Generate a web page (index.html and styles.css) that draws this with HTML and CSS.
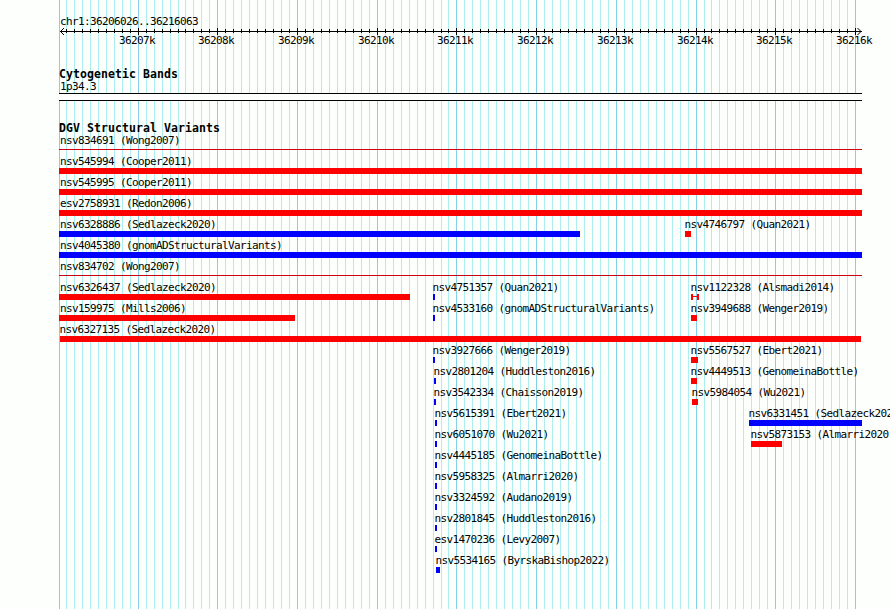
FILE: index.html
```
<!DOCTYPE html>
<html lang="en">
<head>
    <meta charset="UTF-8">
    <title>chr1:36206026..36216063</title>
    <link rel="stylesheet" href="styles.css">
</head>
<body>
    <div class="panel">
        <svg class="grid" id="grid" width="890" height="609"></svg>

        <div class="region">chr1:36206026..36216063</div>
        <svg class="ruler" id="ruler" width="890" height="20"></svg>

        <h2 class="track-title">Cytogenetic Bands</h2>
        <div class="band-label">1p34.3</div>
        <div class="band"></div>

        <h2 class="track-title variants-title">DGV Structural Variants</h2>
        <div id="variants"></div>
    </div>

    <script src="script.js"></script>
</body>
</html>
```
FILE: styles.css
```
body {
    margin: 0;
    background-color: #fdfffc;
    color: #000;
    font-family: "DejaVu Sans Mono", monospace;
    font-size: 11px;
    line-height: 13px;
    letter-spacing: -0.622px;
    white-space: nowrap;
}

.panel {
    position: relative;
    width: 890px;
    height: 609px;
    box-sizing: border-box;
    padding-top: 15px;
    overflow: hidden;
}

/* grid lines sit behind every track */
.grid {
    position: absolute;
    top: 0;
    left: 0;
    z-index: -1;
}

.grid .minor {
    fill: #afeeee;
}

.grid .major {
    fill: #87ceeb;
}

.region,
.band-label {
    padding-left: 60px;
}

.ruler {
    display: block;
    overflow: visible;
}

.ruler path {
    fill: none;
    stroke: #000;
}

.track-title {
    margin: 20px 0 0;
    padding-left: 59px;
    font-size: 11.5px;
    line-height: 12px;
    font-weight: bold;
    letter-spacing: 0.077px;
}

.band {
    width: 803px;
    height: 8px;
    box-sizing: border-box;
    margin-left: 59px;
    border-top: 1px solid #000;
    border-bottom: 1px solid #000;
    background-color: #fff;
}

.variants-title {
    margin-top: 21px;
}

/* every feature shares the single cell of its row */
.row {
    display: grid;
    grid-template-columns: 890px;
    height: 21px;
}

.feature {
    grid-area: 1 / 1;
}

.name {
    margin-left: -0.5px;
}

/* names of features cut off by the left edge start inside it */
.clamped .name {
    margin-left: 0;
    padding-left: 1px;
}

.bar {
    height: 6px;
}

.loss {
    background-color: #f00;
}

.gain {
    background-color: #00f;
}

.line {
    height: 1px;
    margin-top: 2px;
    background-color: #d00010;
}

.range {
    box-sizing: border-box;
    border: solid #f00;
    border-width: 0 2px;
    background: linear-gradient(#f00, #f00) 0 2px / 100% 1px no-repeat;
}
```
FILE: script.js
```
var START = 36206026;
var SCALE = 800 / 10038;
var LEFT = 60.53;

// [name, x, width, type]
var rows = [
    [["nsv834691 (Wong2007)", 59, 803, "line"]],
    [["nsv545994 (Cooper2011)", 59, 803, "loss"]],
    [["nsv545995 (Cooper2011)", 59, 803, "loss"]],
    [["esv2758931 (Redon2006)", 59, 803, "loss"]],
    [["nsv6328886 (Sedlazeck2020)", 59, 521, "gain"], ["nsv4746797 (Quan2021)", 685, 6, "loss"]],
    [["nsv4045380 (gnomADStructuralVariants)", 59, 803, "gain"]],
    [["nsv834702 (Wong2007)", 59, 803, "line"]],
    [["nsv6326437 (Sedlazeck2020)", 59, 351, "loss"], ["nsv4751357 (Quan2021)", 433, 2, "gain"], ["nsv1122328 (Alsmadi2014)", 691, 8, "range"]],
    [["nsv159975 (Mills2006)", 59, 236, "loss"], ["nsv4533160 (gnomADStructuralVariants)", 433, 2, "gain"], ["nsv3949688 (Wenger2019)", 691, 6, "loss"]],
    [["nsv6327135 (Sedlazeck2020)", 60, 801, "loss"]],
    [["nsv3927666 (Wenger2019)", 433, 2, "gain"], ["nsv5567527 (Ebert2021)", 691, 7, "loss"]],
    [["nsv2801204 (Huddleston2016)", 434, 2, "gain"], ["nsv4449513 (GenomeinaBottle)", 691, 6, "loss"]],
    [["nsv3542334 (Chaisson2019)", 434, 2, "gain"], ["nsv5984054 (Wu2021)", 692, 6, "loss"]],
    [["nsv5615391 (Ebert2021)", 435, 2, "gain"], ["nsv6331451 (Sedlazeck2020)", 749, 113, "gain"]],
    [["nsv6051070 (Wu2021)", 435, 2, "gain"], ["nsv5873153 (Almarri2020)", 751, 31, "loss"]],
    [["nsv4445185 (GenomeinaBottle)", 435, 2, "gain"]],
    [["nsv5958325 (Almarri2020)", 435, 2, "gain"]],
    [["nsv3324592 (Audano2019)", 435, 2, "gain"]],
    [["nsv2801845 (Huddleston2016)", 435, 2, "gain"]],
    [["esv1470236 (Levy2007)", 435, 2, "gain"]],
    [["nsv5534165 (ByrskaBishop2022)", 436, 4, "gain"]]
];

function drawScale() {
    var grid = '<rect class="major" x="59" y="0" width="1" height="609"/>';
    // axis with its two arrow heads
    var ticks = "M60 3.5H862M64 0L60.5 3.5L64 7M857.5 0L861 3.5L857.5 7";
    var labels = "";

    for (var pos = 36206100; pos <= 36216000; pos += 100) {
        var x = Math.floor(LEFT + (pos - START) * SCALE);
        var major = pos % 1000 === 0;
        grid += '<rect class="' + (major ? "major" : "minor") + '" x="' + x + '" y="0" width="1" height="609"/>';
        ticks += "M" + (x + 0.5) + (major ? " 0V7" : " 1V5");
        if (major) {
            labels += '<text x="' + (x - 19) + '" y="16">' + pos / 1000 + "k</text>";
        }
    }

    document.getElementById("grid").innerHTML = grid;
    document.getElementById("ruler").innerHTML = '<path d="' + ticks + '"/>' + labels;
}

function drawVariants() {
    var html = "";
    rows.forEach(function (row) {
        html += '<div class="row">';
        row.forEach(function (f) {
            // a bar at 59 runs past the left edge, the one at 60 starts on it
            var state = f[1] === 59 ? " clamped" : "";
            html += '<div class="feature' + state + '" style="margin-left:' + f[1] + 'px">' +
                '<div class="name">' + f[0] + "</div>" +
                '<div class="bar ' + f[3] + '" style="width:' + f[2] + 'px"></div></div>';
        });
        html += "</div>";
    });
    document.getElementById("variants").innerHTML = html;
}

drawScale();
drawVariants();
```
